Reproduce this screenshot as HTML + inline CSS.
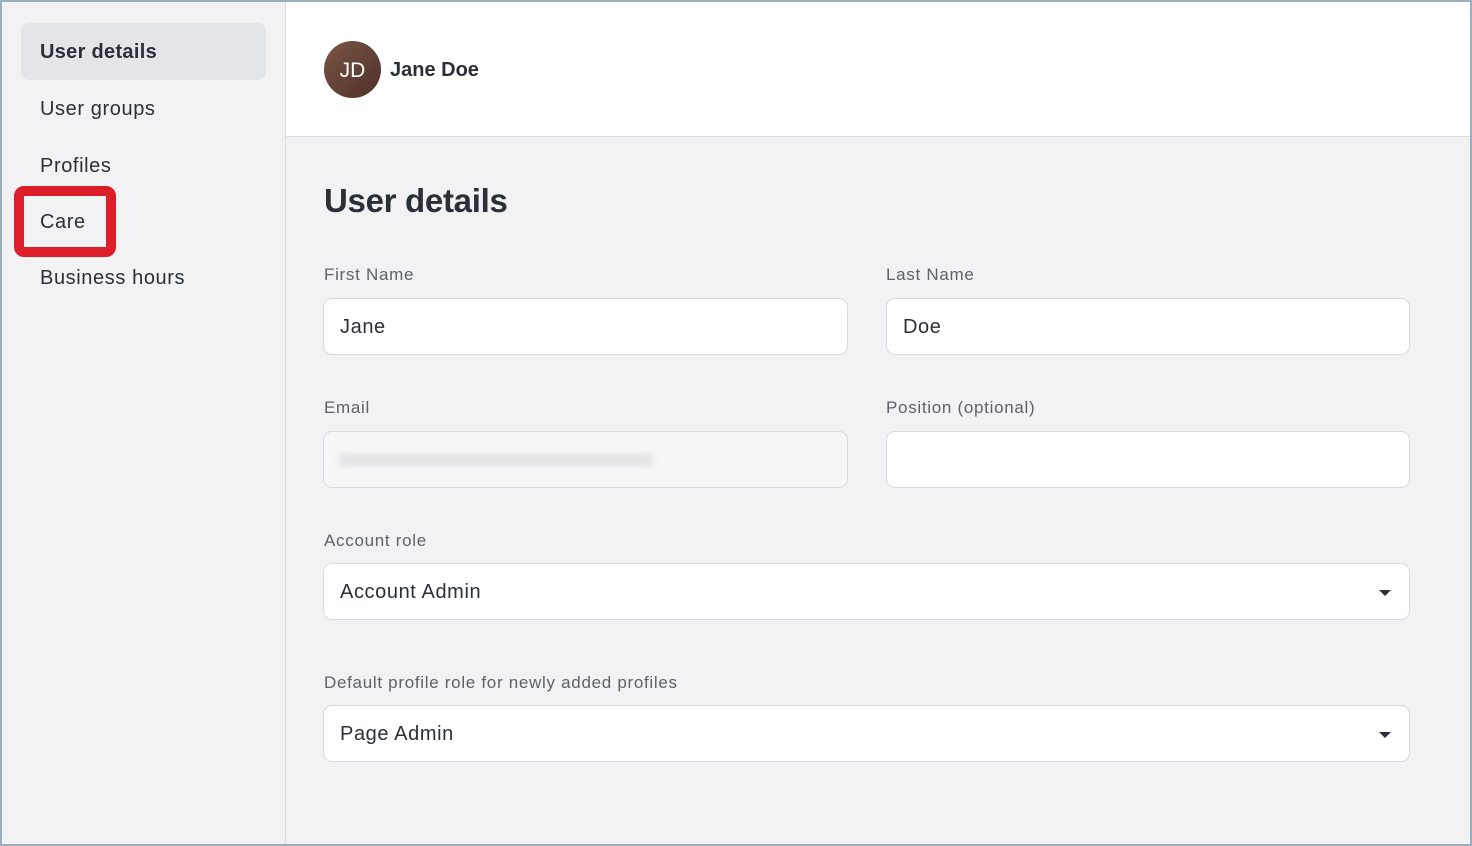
<!DOCTYPE html><html><head><style>
*{box-sizing:border-box;margin:0;padding:0}
body{width:1472px;height:846px;overflow:hidden;font-family:"Liberation Sans",sans-serif;background:#f2f2f4;position:relative;color:#2b2f38}
.frame{position:absolute;inset:0;border:2px solid #9ab0bd;pointer-events:none;z-index:10}
.side{position:absolute;left:0;top:0;width:286px;height:846px;background:#f2f2f4;border-right:1px solid #dcdde0}
.nav{position:absolute;left:40px;font-size:20px;color:#2b2f38;letter-spacing:0.6px}
.sel{position:absolute;left:21px;top:23px;width:245px;height:57px;background:#e4e5e8;border-radius:8px}
.care{position:absolute;left:14px;top:186px;width:102px;height:71px;border:10px solid #dc1f2b;border-radius:10px}
.head{position:absolute;left:286px;top:2px;right:2px;height:135px;background:#fff;border-bottom:1px solid #dcdde0}
.av{position:absolute;left:38px;top:39px;width:57px;height:57px;border-radius:50%;background:linear-gradient(135deg,#7a5446,#4e3129);color:#fff;font-size:21px;text-align:center;line-height:59px}
.lbl{position:absolute;font-size:17px;color:#5d6169;letter-spacing:0.7px}
.in{position:absolute;height:57px;background:#fff;border:1px solid #d9dadd;border-radius:9px;font-size:20px;padding-left:16px;line-height:57px;color:#2b2f38;letter-spacing:0.6px}
.arr{position:absolute;right:18px;top:26px;width:0;height:0;border-left:6px solid transparent;border-right:6px solid transparent;border-top:6px solid #2b2f38}
</style></head><body>
<div class="frame"></div>
<div class="side">
<div class="sel"></div>
<div class="nav" style="top:41px;font-weight:bold;letter-spacing:0.3px">User details</div>
<div class="nav" style="top:98px">User groups</div>
<div class="nav" style="top:155px">Profiles</div>
<div class="care"></div>
<div class="nav" style="top:211px">Care</div>
<div class="nav" style="top:267px">Business hours</div>
</div>
<div class="head"><div class="av">JD</div><div style="position:absolute;left:104px;top:57px;font-size:20px;font-weight:bold">Jane Doe</div></div>
<div style="position:absolute;left:324px;top:182px;font-size:33px;font-weight:bold;color:#2b2f38;letter-spacing:-0.3px">User details</div>
<div class="lbl" style="left:324px;top:265px">First Name</div>
<div class="lbl" style="left:886px;top:265px">Last Name</div>
<div class="in" style="left:323px;top:298px;width:525px">Jane</div>
<div class="in" style="left:886px;top:298px;width:524px">Doe</div>
<div class="lbl" style="left:324px;top:398px">Email</div>
<div class="lbl" style="left:886px;top:398px">Position (optional)</div>
<div class="in" style="left:323px;top:431px;width:525px;background:#f7f7f8"><div style="position:absolute;left:14px;top:22px;width:316px;height:12px;background:#e2e3e6;border-radius:6px;filter:blur(3px)"></div></div>
<div class="in" style="left:886px;top:431px;width:524px"></div>
<div class="lbl" style="left:324px;top:531px">Account role</div>
<div class="in" style="left:323px;top:563px;width:1087px">Account Admin<div class="arr"></div></div>
<div class="lbl" style="left:324px;top:673px">Default profile role for newly added profiles</div>
<div class="in" style="left:323px;top:705px;width:1087px">Page Admin<div class="arr"></div></div>
</body></html>
